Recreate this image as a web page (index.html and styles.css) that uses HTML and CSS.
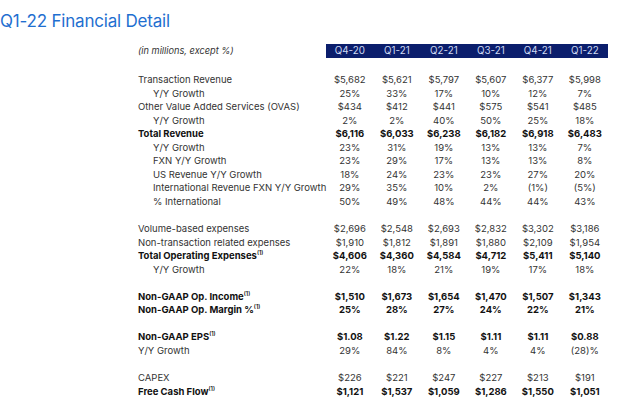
FILE: index.html
```html
<!DOCTYPE html>
<html lang="en">
<head>
    <meta charset="UTF-8">
    <title>Q1-22 Financial Detail</title>
    <link rel="stylesheet" href="styles.css">
</head>
<body>
    <div class="page">
        <h1 class="title">Q1-22 Financial Detail</h1>

        <table class="fin">
            <colgroup>
                <col class="label-col">
                <col span="6" class="q-col">
            </colgroup>
            <thead>
                <tr>
                    <th class="note">(in millions, except %)</th>
                    <th class="q">Q4-20</th>
                    <th class="q">Q1-21</th>
                    <th class="q">Q2-21</th>
                    <th class="q">Q3-21</th>
                    <th class="q">Q4-21</th>
                    <th class="q">Q1-22</th>
                </tr>
            </thead>
            <tbody>
                <tr class="gap first"><td colspan="7"></td></tr>

                <!-- Revenue -->
                <tr><td>Transaction Revenue</td><td>$5,682</td><td>$5,621</td><td>$5,797</td><td>$5,607</td><td>$6,377</td><td>$5,998</td></tr>
                <tr><td class="sub">Y/Y Growth</td><td>25%</td><td>33%</td><td>17%</td><td>10%</td><td>12%</td><td>7%</td></tr>
                <tr><td>Other Value Added Services (OVAS)</td><td>$434</td><td>$412</td><td>$441</td><td>$575</td><td>$541</td><td>$485</td></tr>
                <tr><td class="sub">Y/Y Growth</td><td>2%</td><td>2%</td><td>40%</td><td>50%</td><td>25%</td><td>18%</td></tr>
                <tr class="bold"><td>Total Revenue</td><td>$6,116</td><td>$6,033</td><td>$6,238</td><td>$6,182</td><td>$6,918</td><td>$6,483</td></tr>
                <tr><td class="sub">Y/Y Growth</td><td>23%</td><td>31%</td><td>19%</td><td>13%</td><td>13%</td><td>7%</td></tr>
                <tr><td class="sub">FXN Y/Y Growth</td><td>23%</td><td>29%</td><td>17%</td><td>13%</td><td>13%</td><td>8%</td></tr>
                <tr><td class="sub">US Revenue Y/Y Growth</td><td>18%</td><td>24%</td><td>23%</td><td>23%</td><td>27%</td><td>20%</td></tr>
                <tr><td class="sub">International Revenue FXN Y/Y Growth</td><td>29%</td><td>35%</td><td>10%</td><td>2%</td><td>(1%)</td><td>(5%)</td></tr>
                <tr><td class="sub">% International</td><td>50%</td><td>49%</td><td>48%</td><td>44%</td><td>44%</td><td>43%</td></tr>

                <tr class="gap"><td colspan="7"></td></tr>

                <!-- Expenses -->
                <tr><td>Volume-based expenses</td><td>$2,696</td><td>$2,548</td><td>$2,693</td><td>$2,832</td><td>$3,302</td><td>$3,186</td></tr>
                <tr><td>Non-transaction related expenses</td><td>$1,910</td><td>$1,812</td><td>$1,891</td><td>$1,880</td><td>$2,109</td><td>$1,954</td></tr>
                <tr class="bold"><td>Total Operating Expenses<sup>(1)</sup></td><td>$4,606</td><td>$4,360</td><td>$4,584</td><td>$4,712</td><td>$5,411</td><td>$5,140</td></tr>
                <tr><td class="sub">Y/Y Growth</td><td>22%</td><td>18%</td><td>21%</td><td>19%</td><td>17%</td><td>18%</td></tr>

                <tr class="gap"><td colspan="7"></td></tr>

                <!-- Margin -->
                <tr class="bold"><td>Non-GAAP Op. Income<sup>(1)</sup></td><td>$1,510</td><td>$1,673</td><td>$1,654</td><td>$1,470</td><td>$1,507</td><td>$1,343</td></tr>
                <tr class="bold"><td>Non-GAAP Op. Margin %<sup>(1)</sup></td><td>25%</td><td>28%</td><td>27%</td><td>24%</td><td>22%</td><td>21%</td></tr>

                <tr class="gap"><td colspan="7"></td></tr>

                <!-- EPS -->
                <tr class="bold"><td>Non-GAAP EPS<sup>(1)</sup></td><td>$1.08</td><td>$1.22</td><td>$1.15</td><td>$1.11</td><td>$1.11</td><td>$0.88</td></tr>
                <tr><td>Y/Y Growth</td><td>29%</td><td>84%</td><td>8%</td><td>4%</td><td>4%</td><td>(28)%</td></tr>

                <tr class="gap"><td colspan="7"></td></tr>

                <!-- Cash -->
                <tr><td>CAPEX</td><td>$226</td><td>$221</td><td>$247</td><td>$227</td><td>$213</td><td>$191</td></tr>
                <tr class="bold"><td>Free Cash Flow<sup>(1)</sup></td><td>$1,121</td><td>$1,537</td><td>$1,059</td><td>$1,286</td><td>$1,550</td><td>$1,051</td></tr>
            </tbody>
        </table>
    </div>
</body>
</html>
```

FILE: styles.css
```css
/* Page */
body {
    margin: 0;
    background: #fff;
    font-family: Inter, "Liberation Sans", sans-serif;
    color: #333;
}

.page {
    padding-top: 9px;
}

/* Title */
.title {
    margin: 0 0 11px 0;
    font-size: 17px;
    font-weight: 400;
    line-height: 24px;
    letter-spacing: -0.2px;
    color: #1f6fd0;
}

/* Table */
.fin {
    margin-left: 138px;
    border-collapse: collapse;
    table-layout: fixed;
    font-size: 9.5px;
}
.label-col { width: 187px; }
.q-col { width: 47px; }

.fin th,
.fin td {
    padding: 0;
    height: 13.55px;
    line-height: 13.55px;
    white-space: nowrap;
}

/* Header bar */
.fin th.note {
    font-style: italic;
    font-weight: 400;
    text-align: left;
    font-size: 9.2px;
    color: #333;
}
.fin th.q {
    height: 13px;
    line-height: 13px;
    background: #0b1e6c;
    color: #cfdaf3;
    font-weight: 400;
    text-align: center;
    font-size: 9.8px;
}

/* Rows */
.fin td {
    text-align: center;
}
.fin td:first-child {
    text-align: left;
}
.fin td.sub {
    padding-left: 15px;
}
.fin tr.bold td {
    font-weight: 700;
    color: #111;
}
.fin tr.gap td {
    height: 13.55px;
}
.fin tr.gap.first td {
    height: 15.5px;
}

sup {
    font-size: 5.5px;
    line-height: 0;
    vertical-align: 4px;
    font-weight: 600;
}
```
